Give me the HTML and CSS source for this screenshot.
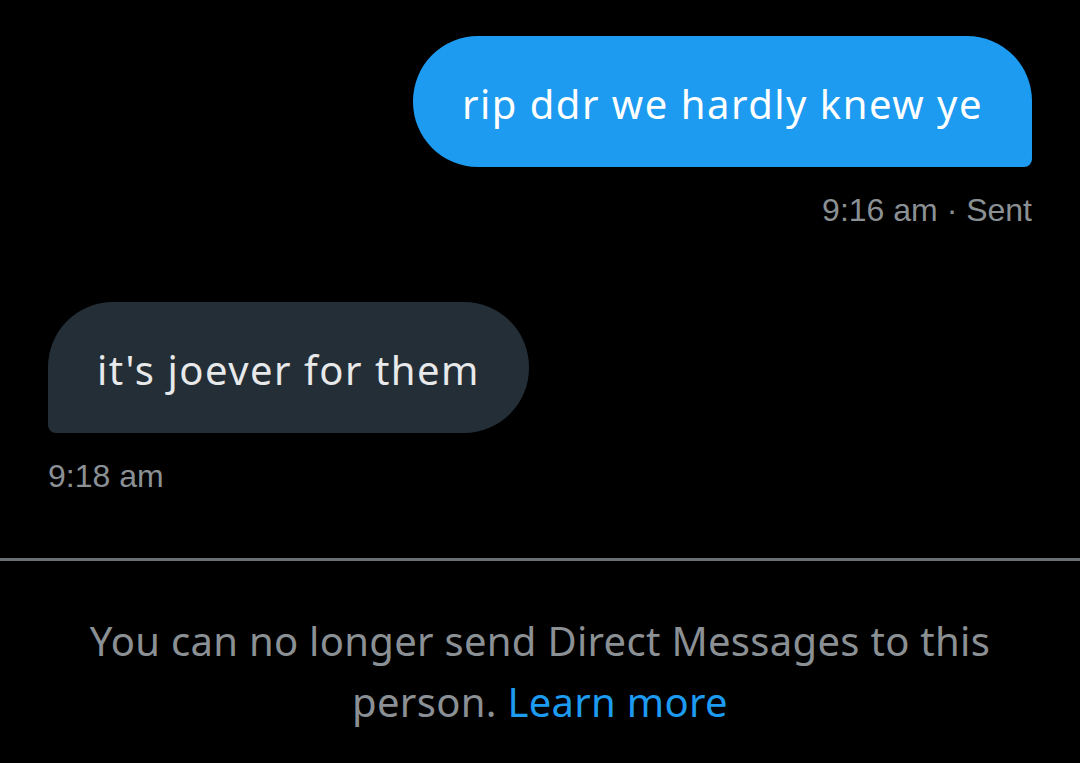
FILE: index.html
```html
<!DOCTYPE html>
<html lang="en">

<head>
  <meta charset="UTF-8">
  <meta name="viewport" content="width=device-width, initial-scale=1.0">
  <title>Direct Messages</title>
  <link rel="stylesheet" href="styles.css">
</head>

<body>
  <div class="thread">
    <div class="msg msg-sent">
      <div class="bubble bubble-sent">rip ddr we hardly knew ye</div>
      <div class="meta">9:16 am · Sent</div>
    </div>
    <div class="msg msg-received">
      <div class="bubble bubble-received">it's joever for them</div>
      <div class="meta">9:18 am</div>
    </div>
  </div>
  <div class="notice">
    <p>You can no longer send Direct Messages to this person. <a href="#">Learn more</a></p>
  </div>
</body>

</html>
```

FILE: styles.css
```css
* {
  margin: 0;
  padding: 0;
  box-sizing: border-box;
}

body {
  background: #000;
  font-family: "Noto Sans", "Open Sans", sans-serif;
  color: #e7e9ea;
}

.thread {
  display: flex;
  flex-direction: column;
  padding: 36px 48px 0 48px;
}

.msg {
  display: flex;
  flex-direction: column;
}

.msg-sent {
  align-items: flex-end;
}

.msg-received {
  align-items: flex-start;
  margin-top: 75px;
}

.bubble {
  font-size: 40px;
  letter-spacing: 1.5px;
  line-height: 45px;
  padding: 45px 49px 41px 49px;
  border-radius: 65px;
}

.bubble-sent {
  background: #1d9bf0;
  color: #fff;
  border-bottom-right-radius: 8px;
}

.bubble-received {
  background: #242e36;
  color: #e7e9ea;
  border-bottom-left-radius: 8px;
}

.meta {
  margin-top: 26px;
  font-family: "Liberation Sans", Arial, sans-serif;
  font-size: 32px;
  line-height: 34px;
  color: #8b9095;
}

.notice {
  margin-top: 65px;
  border-top: 3px solid #6a6f74;
  padding: 49px 60px 0 60px;
  text-align: center;
}

.notice p {
  font-size: 40px;
  letter-spacing: 0.3px;
  line-height: 61px;
  color: #8b9095;
}

.notice a {
  color: #1d9bf0;
  text-decoration: none;
}
```
